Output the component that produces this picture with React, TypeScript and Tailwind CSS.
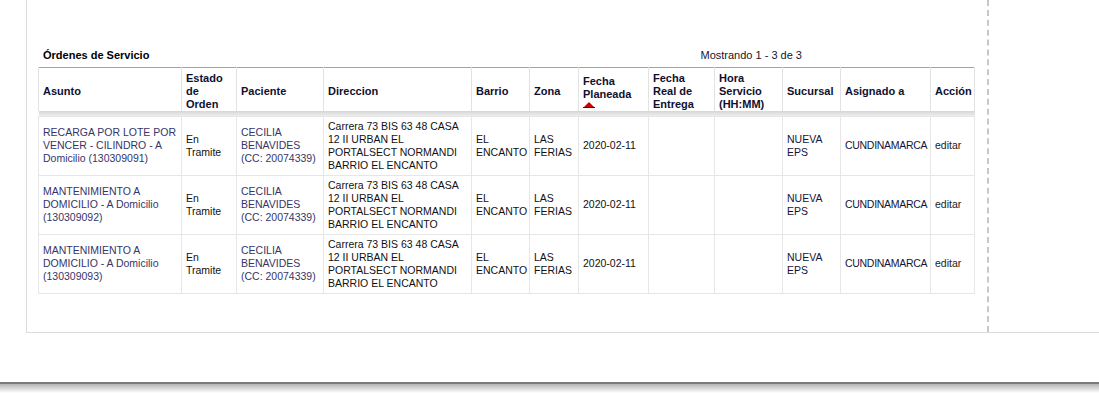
import React from 'react';

type Orden = {
    asunto: string;
    estado: string;
    paciente: string;
    cedula: string;
    direccion: string;
    barrio: string;
    zona: string;
    fechaPlaneada: string;
    fechaReal: string;
    hora: string;
    sucursal: string;
    asignado: string;
};

const direccion = 'Carrera 73 BIS 63 48 CASA 12 II URBAN EL PORTALSECT NORMANDI BARRIO EL ENCANTO';

const ORDENES: Orden[] = [
    { asunto: 'RECARGA POR LOTE POR VENCER - CILINDRO - A Domicilio (130309091)', estado: 'En Tramite', paciente: 'CECILIA BENAVIDES', cedula: '(CC: 20074339)', direccion, barrio: 'EL ENCANTO', zona: 'LAS FERIAS', fechaPlaneada: '2020-02-11', fechaReal: '', hora: '', sucursal: 'NUEVA EPS', asignado: 'CUNDINAMARCA' },
    { asunto: 'MANTENIMIENTO A DOMICILIO - A Domicilio (130309092)', estado: 'En Tramite', paciente: 'CECILIA BENAVIDES', cedula: '(CC: 20074339)', direccion, barrio: 'EL ENCANTO', zona: 'LAS FERIAS', fechaPlaneada: '2020-02-11', fechaReal: '', hora: '', sucursal: 'NUEVA EPS', asignado: 'CUNDINAMARCA' },
    { asunto: 'MANTENIMIENTO A DOMICILIO - A Domicilio (130309093)', estado: 'En Tramite', paciente: 'CECILIA BENAVIDES', cedula: '(CC: 20074339)', direccion, barrio: 'EL ENCANTO', zona: 'LAS FERIAS', fechaPlaneada: '2020-02-11', fechaReal: '', hora: '', sucursal: 'NUEVA EPS', asignado: 'CUNDINAMARCA' },
];

const COL_WIDTHS = [143, 55, 87, 148, 58, 49, 70, 66, 68, 58, 90, 44];

const th = 'border-x border-[#e2e2e2] px-[4px] pt-[4px] pb-0 h-[43px] align-middle text-left font-bold text-[11px] leading-[13px] text-[#10102e]';
const td = 'border border-[#e6e6e6] px-[4px] py-[3px] align-middle text-[10.5px] leading-[13px]';

const SortArrow: React.FC = () => (
    <svg width="12" height="6" viewBox="0 0 12 6" className="block mt-[1px]">
        <polygon points="6,0 12,6 0,6" fill="#d10000" />
        <line x1="0" y1="5.5" x2="12" y2="5.5" stroke="#6a0000" strokeWidth="1" />
    </svg>
);

const App: React.FC = () => {
    return (
        <div className="w-[1099px] h-[393px] overflow-hidden bg-white font-['Liberation_Sans',Arial,sans-serif] text-[#111]">
            <div className="flex h-[333px] ml-[26px] border-l border-b border-[#dcdcdc]">
                <div className="w-[962px] pt-[49px] pl-[11px] border-r-2 border-dashed border-[#c8c8c8]">
                    <div className="flex items-center justify-between w-[937px] h-[13px] mb-[5px] text-[11px] leading-[13px]">
                        <span className="pl-[5px] font-bold text-black">Órdenes de Servicio</span>
                        <span className="mr-[173px] text-[#15152e]">Mostrando 1 - 3 de 3</span>
                    </div>
                    <table className="table-fixed border-collapse w-[937px] border-t border-t-[#a3a3a3]">
                        <colgroup>
                            {COL_WIDTHS.map((w, i) => (
                                <col key={i} style={{ width: w }} />
                            ))}
                        </colgroup>
                        <thead>
                            <tr className="bg-white">
                                <th className={th}>Asunto</th>
                                <th className={th}>Estado de Orden</th>
                                <th className={th}>Paciente</th>
                                <th className={th}>Direccion</th>
                                <th className={th}>Barrio</th>
                                <th className={th}>Zona</th>
                                <th className={th}>
                                    <div>Fecha Planeada</div>
                                    <SortArrow />
                                </th>
                                <th className={th}>Fecha Real de Entrega</th>
                                <th className={th}>Hora Servicio (HH:MM)</th>
                                <th className={th}>Sucursal</th>
                                <th className={th}>Asignado a</th>
                                <th className={th}>Acción</th>
                            </tr>
                            <tr>
                                <td colSpan={12} className="h-[5px] p-0 bg-gradient-to-b from-[#d6d6d6] to-[#ededed]" />
                            </tr>
                        </thead>
                        <tbody>
                            {ORDENES.map((o, i) => (
                                <tr key={i} className="bg-white">
                                    <td className={`${td} text-[#35356a]`}>{o.asunto}</td>
                                    <td className={td}>{o.estado}</td>
                                    <td className={`${td} text-[#35356a]`}>
                                        {o.paciente} {o.cedula}
                                    </td>
                                    <td className={td}>{o.direccion}</td>
                                    <td className={td}>{o.barrio}</td>
                                    <td className={td}>{o.zona}</td>
                                    <td className={td}>{o.fechaPlaneada}</td>
                                    <td className={td}>{o.fechaReal}</td>
                                    <td className={td}>{o.hora}</td>
                                    <td className={`${td} text-[#14143a]`}>{o.sucursal}</td>
                                    <td className={`${td} text-[#14143a] tracking-[-0.3px]`}>{o.asignado}</td>
                                    <td className={`${td} text-[#222]`}>editar</td>
                                </tr>
                            ))}
                        </tbody>
                    </table>
                </div>
                <div className="flex-1" />
            </div>
            <div className="mt-[49px] h-[2px] bg-[#7a7a7a]" />
            <div className="h-[9px] bg-gradient-to-b from-[#b4b4b4] to-white" />
        </div>
    );
};

export default App;
